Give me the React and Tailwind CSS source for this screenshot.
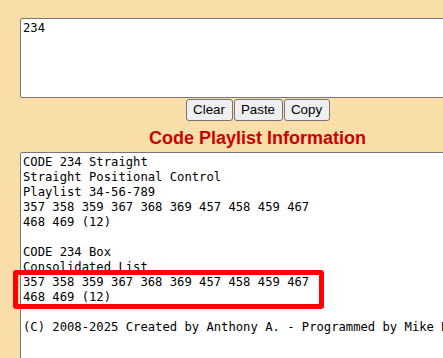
const mono = { fontFamily: '"DejaVu Sans Mono", "Liberation Mono", monospace' }

const lines = [
    "CODE 234 Straight",
    "Straight Positional Control",
    "Playlist 34-56-789",
    "357 358 359 367 368 369 457 458 459 467",
    "468 469 (12)",
    "",
    "CODE 234 Box",
    "Consolidated List",
    "357 358 359 367 368 369 457 458 459 467",
    "468 469 (12)",
    "",
    "(C) 2008-2025 Created by Anthony A. - Programmed by Mike H",
]

function App() {
    return (
        <div className="relative w-[443px] h-[358px] overflow-hidden bg-[#f9dea9]">
            <div className="w-[475px] ml-[20px] pt-[18px]">
                {/* Input */}
                <div
                    className="h-[80px] bg-white border border-[#767676] rounded-[2px] px-[2px] pt-[2px] text-[12.2px] leading-[15px] text-black"
                    style={mono}
                >
                    234
                </div>

                {/* Buttons */}
                <div className="mt-[1px] flex justify-center gap-[1px] font-['Liberation_Sans',Arial,sans-serif] text-[13.33px] text-black">
                    <button className="w-[47px] h-[22px] bg-[#efefef] border border-[#767676] rounded-[3px]">Clear</button>
                    <button className="w-[49px] h-[22px] bg-[#efefef] border border-[#767676] rounded-[3px]">Paste</button>
                    <button className="w-[46px] h-[22px] bg-[#efefef] border border-[#767676] rounded-[3px]">Copy</button>
                </div>

                <h2 className="mt-[7px] mb-[3px] text-center text-[18px] leading-[21px] font-bold text-[#cc0000] font-['Liberation_Sans',Arial,sans-serif]">
                    Code Playlist Information
                </h2>

                {/* Output */}
                <div
                    className="h-[260px] bg-white border border-[#767676] rounded-[2px] px-[2px] pt-[2px] text-[12.2px] leading-[15px] text-black whitespace-pre"
                    style={mono}
                >
                    {lines.map((l, i) => (
                        <div key={i} className="h-[15px]">{l}</div>
                    ))}
                </div>
            </div>

            {/* highlight */}
            <div className="absolute left-[13px] top-[270px] w-[311px] h-[39px] border-[5px] border-[#ff0000] rounded-[3px]"></div>
        </div>
    )
}

export default App
